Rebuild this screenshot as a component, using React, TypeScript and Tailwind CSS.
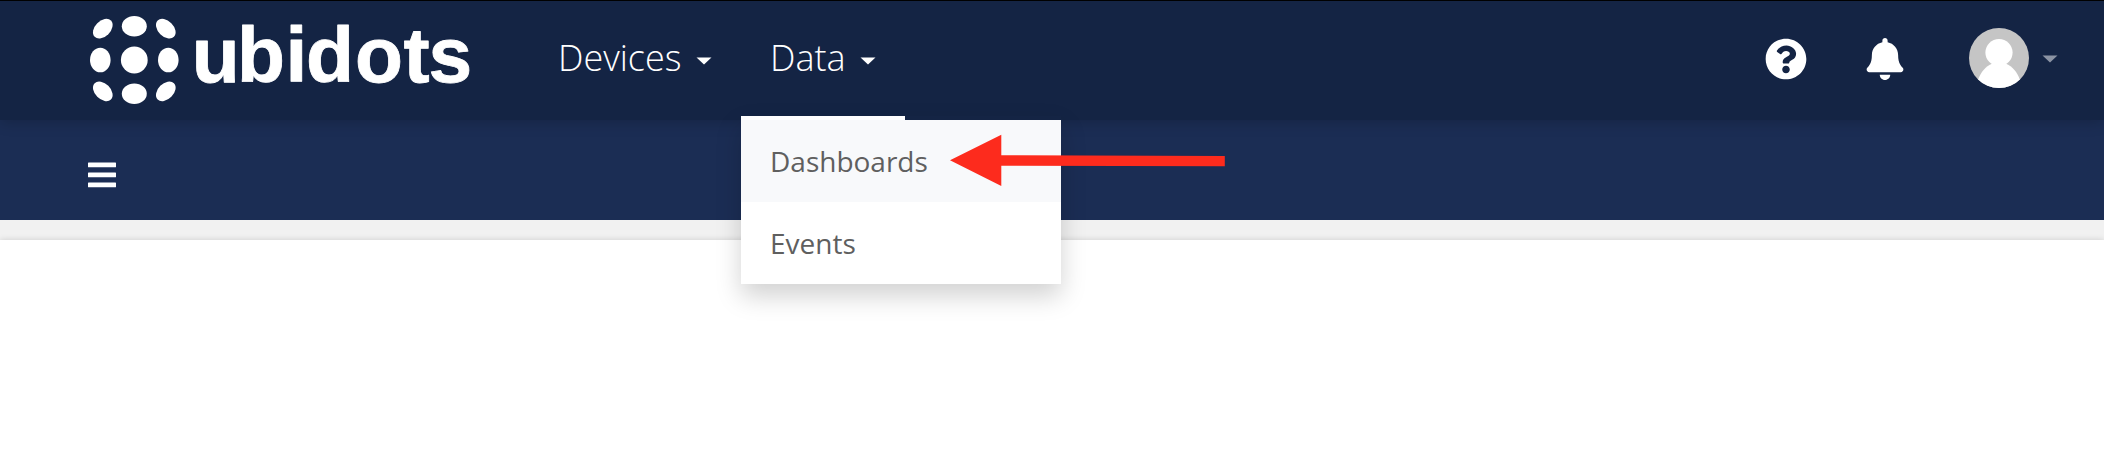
import { FaBell, FaQuestionCircle } from "react-icons/fa";

function Logo() {
  return (
    <svg width="400" height="119" viewBox="80 1 400 119" className="shrink-0 text-white" fill="currentColor" role="img" aria-label="ubidots">
      <ellipse cx="102.8" cy="28.7" rx="11.5" ry="7.8" transform="rotate(-45 102.8 28.7)" />
      <ellipse cx="165.8" cy="28.7" rx="11.5" ry="7.8" transform="rotate(45 165.8 28.7)" />
      <ellipse cx="102.8" cy="91.3" rx="11.5" ry="7.8" transform="rotate(45 102.8 91.3)" />
      <ellipse cx="165.8" cy="91.3" rx="11.5" ry="7.8" transform="rotate(-45 165.8 91.3)" />
      <ellipse cx="134.3" cy="26.2" rx="12.5" ry="10.3" />
      <ellipse cx="134.3" cy="93.8" rx="12.5" ry="10.3" />
      <ellipse cx="100.3" cy="60" rx="10.3" ry="12.3" />
      <ellipse cx="168.3" cy="60" rx="10.3" ry="12.3" />
      <circle cx="134.3" cy="60" r="13.4" />
      <text
        x="191.800 237 285.500 306 355 403.500 428.500"
        y="82"
        fontFamily="Liberation Sans, sans-serif"
        fontWeight="700"
        fontSize="78.5"
        stroke="currentColor"
        strokeWidth="0.8"
        strokeLinejoin="round"
      >
        ubidots
      </text>
    </svg>
  );
}

function Caret({ className = "" }: { className?: string }) {
  return (
    <svg width="16" height="8" viewBox="0 0 16 8" className={className} fill="currentColor">
      <path d="M0.5 0.5h15L8 7.5z" />
    </svg>
  );
}

function Avatar() {
  return (
    <svg width="60" height="60" viewBox="0 0 60 60" className="shrink-0">
      <defs>
        <clipPath id="avatar">
          <circle cx="30" cy="30" r="30" />
        </clipPath>
      </defs>
      <g clipPath="url(#avatar)">
        <rect width="60" height="60" fill="#c5c5c5" />
        <circle cx="30" cy="24.500" r="13.600" fill="#fff" />
        <path d="M9 52C12 44 16 38.500 23.500 35.500H36.500C44 38.500 48 44 51 52L47 60H13z" fill="#fff" />
      </g>
    </svg>
  );
}

function DataMenu() {
  return (
    <div className="absolute left-0 top-[115px] z-20 w-[320px] shadow-[0_12px_24px_rgba(0,0,0,0.18)]">
      <div className="h-1 w-[164px] bg-white" />
      <div className="flex h-[82px] items-center bg-[#f8f9fb] pl-[29px]">Dashboards</div>
      <div className="flex h-[82px] items-center bg-white pl-[29px]">Events</div>
    </div>
  );
}

export default function App() {
  return (
    <div className="relative flex h-[463px] w-[2104px] flex-col overflow-hidden bg-white font-['Open_Sans',sans-serif]">
      <header className="relative z-10 flex h-[120px] shrink-0 border-t border-black bg-[#142444] pl-20 pr-[46px] text-white shadow-[0_2px_14px_rgba(0,0,0,0.2)]">
        <Logo />
        <nav className="flex text-[36px] font-light leading-none">
          <div className="flex h-[115px] w-[261px] items-center pl-[78px]">
            <span className="mb-0.5 w-[138px]">Devices</span>
            <Caret className="mt-1" />
          </div>
          <div className="relative flex h-[115px] w-[164px] items-center pl-[29px]">
            <span className="mb-0.5 w-[90px]">Data</span>
            <Caret className="mt-1" />
            <div className="absolute left-0 top-0 text-[28px] font-normal text-[#5f5f5f]">
              <DataMenu />
            </div>
          </div>
        </nav>
        <div className="ml-auto flex h-[114px] items-center">
          <FaQuestionCircle size={42} className="mr-[57px] mt-0.5" />
          <FaBell size={42} className="mr-[63px] mt-0.5" />
          <Avatar />
          <Caret className="ml-[13px] mt-0.5 text-[#8b93a4]" />
        </div>
      </header>
      <div className="flex h-[100px] shrink-0 items-start bg-[#1b2d54] pl-[88px] pt-[42px]">
        <svg width="28" height="26" viewBox="0 0 28 26" fill="#fff">
          <rect y="0.500" width="28" height="4.800" rx="0.600" />
          <rect y="10.500" width="28" height="4.800" rx="0.600" />
          <rect y="20.500" width="28" height="4.800" rx="0.600" />
        </svg>
      </div>
      <div className="h-5 shrink-0 bg-[#f1f1f1]" />
      <main className="grow bg-white shadow-[0_0_6px_rgba(0,0,0,0.15)]" />
      <svg width="280" height="56" viewBox="945 132 280 56" className="absolute left-[945px] top-[132px] z-30" fill="#fd2b1d">
        <path d="M950 160.300L1001.300 134.800V155.300L1224.800 156V166.300L1001.300 165.700V186z" />
      </svg>
    </div>
  );
}
